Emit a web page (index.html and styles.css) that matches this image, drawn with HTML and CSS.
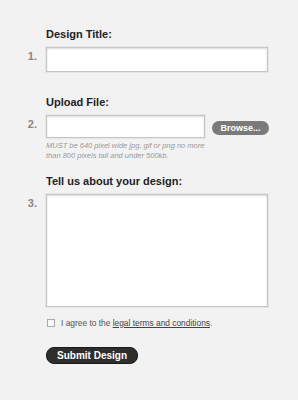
FILE: index.html
```html
<!DOCTYPE html>
<html>

<head>
    <title>Submit a Design</title>
    <link rel="stylesheet" href="styles.css">
</head>

<body>
    <form class="design-form" action="#" method="post">
        <div class="field">
            <label class="field-label" for="title">Design Title:</label>
            <div class="field-num">1.</div>
            <input type="text" id="title" class="text-input title-input">
        </div>

        <div class="field field-upload">
            <label class="field-label" for="upload">Upload File:</label>
            <div class="field-num">2.</div>
            <div class="upload-row">
                <input type="text" id="upload" class="text-input upload-input">
                <button type="button" class="browse-btn">Browse...</button>
            </div>
            <p class="help-text">MUST be 640 pixel wide jpg, gif or png no more than 800 pixels tall and under 500kb.</p>
        </div>

        <div class="field">
            <label class="field-label" for="about">Tell us about your design:</label>
            <div class="field-num">3.</div>
            <textarea id="about" class="text-input about-input"></textarea>
        </div>

        <div class="agree-row">
            <input type="checkbox" id="agree" class="agree-box">
            <label for="agree">I agree to the <a href="#">legal terms and conditions</a>.</label>
        </div>

        <button type="submit" class="submit-btn">Submit Design</button>
    </form>
</body>

</html>
```

FILE: styles.css
```css
body {
    margin: 0;
    background-color: #f2f2f2;
    font-family: "Liberation Sans", Arial, sans-serif;
    color: #222;
}

.design-form {
    padding: 28px 30px 0 0;
}

.field {
    display: grid;
    grid-template-columns: 46px 1fr;
    margin-bottom: 24px;
}

.field-upload {
    margin-bottom: 14px;
}

.field-label {
    grid-column: 2;
    font-size: 11px;
    line-height: 13px;
    font-weight: bold;
    color: #222;
    margin-bottom: 6px;
}

.field-num {
    grid-column: 1;
    font-size: 11px;
    line-height: 13px;
    font-weight: bold;
    color: #888;
    text-align: right;
    padding: 3px 9px 0 0;
}

.text-input {
    display: block;
    box-sizing: border-box;
    background-color: #fff;
    border: 1px solid #c6c6c6;
    box-shadow: 0 0 0 1px #e6e6e6, inset 0 1px 2px rgba(0, 0, 0, 0.15);
    margin: 0;
    padding: 3px;
    font-family: inherit;
    font-size: 11px;
    outline: none;
}

.title-input {
    width: 222px;
    height: 25px;
}

.upload-row {
    display: flex;
    align-items: center;
    gap: 7px;
}

.upload-input {
    width: 159px;
    height: 23px;
}

.browse-btn {
    height: 14px;
    width: 57px;
    padding: 0;
    border: none;
    border-radius: 7px;
    background-color: #7a7a7a;
    color: #fff;
    font-family: inherit;
    font-size: 9px;
    font-weight: bold;
    line-height: 14px;
    margin-top: 3px;
}

.help-text {
    grid-column: 2;
    margin: 3px 0 0;
    width: 170px;
    font-size: 7.5px;
    line-height: 10px;
    font-style: italic;
    color: #999;
}

.about-input {
    width: 222px;
    height: 113px;
    resize: none;
}

.agree-row {
    display: flex;
    align-items: center;
    margin: -14px 0 0 47px;
    font-size: 8.4px;
    line-height: 12px;
    color: #555;
}

.agree-box {
    appearance: none;
    width: 8px;
    height: 8px;
    margin: 0 6px 0 0;
    border: 1px solid #aaa;
    background-color: #fafafa;
    box-sizing: border-box;
}

.agree-row a {
    color: #444;
    text-decoration: underline;
}

.submit-btn {
    display: block;
    margin: 18px 0 0 46px;
    height: 17px;
    padding: 0 10px;
    border: 1px solid #1a1a1a;
    border-radius: 8px;
    background-color: #2e2e2e;
    color: #fff;
    font-family: inherit;
    font-size: 10px;
    font-weight: bold;
    line-height: 15px;
}
```
